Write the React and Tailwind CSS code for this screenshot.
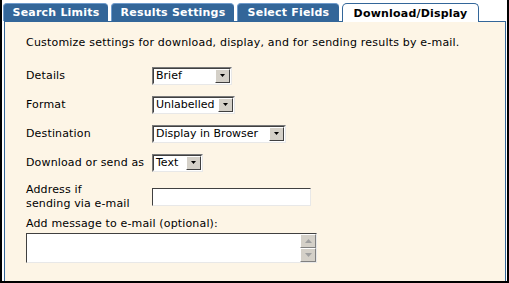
import React from "react";

const font = { fontFamily: '"DejaVu Sans", Verdana, sans-serif' };

function Tab({ label, active, width }) {
  if (active) {
    return (
      <div
        className={`relative z-10 -mb-px h-[19px] ${width} rounded-t-[5px] border border-b-0 border-[#336699] bg-white pt-[3px] text-center text-[11px] font-bold leading-[14px] tracking-[0.2px] text-black`}
      >
        {label}
      </div>
    );
  }
  return (
    <div
      className={`h-[18px] ${width} rounded-t-[4px] border-l border-t border-[#6f9bcc] bg-[#336699] pt-[2px] text-center text-[11px] font-bold leading-[14px] tracking-[0.2px] text-white`}
    >
      {label}
    </div>
  );
}

function Select({ value, width }) {
  return (
    <div
      className={`flex h-[18px] ${width} items-stretch border border-t-[#7a7a7a] border-l-[#7a7a7a] border-r-[#e8e8e8] border-b-[#e8e8e8] bg-white`}
    >
      <div className="flex flex-1 items-stretch border border-t-[#404040] border-l-[#404040] border-r-white border-b-white">
        <span className="flex-1 whitespace-nowrap pl-[2px] text-[11px] leading-[14px] text-black">{value}</span>
        <div className="flex w-[15px] items-center justify-center border border-t-white border-l-white border-r-[#404040] border-b-[#404040] bg-[#d4d0c8]">
          <svg width="7" height="4" viewBox="0 0 7 4">
            <path d="M1 0h5L3.5 3z" fill="#000" />
          </svg>
        </div>
      </div>
    </div>
  );
}

function Row({ label, children }) {
  return (
    <div className="flex items-center">
      <div className="w-[126px] text-[11px] leading-[14px] tracking-[0.15px]">{label}</div>
      {children}
    </div>
  );
}

export default function App() {
  return (
    <div
      className="flex h-[283px] w-[509px] flex-col border-b-2 border-l-2 border-r-2 border-black bg-white"
      style={font}
    >
      {/* Tabs */}
      <div className="ml-[1px] mt-[3px] flex items-end gap-[3px]">
        <Tab label="Search Limits" width="w-[105px]" />
        <Tab label="Results Settings" width="w-[123px]" />
        <Tab label="Select Fields" width="w-[102px]" />
        <Tab label="Download/Display" width="w-[137px]" active />
      </div>

      {/* Panel */}
      <div className="ml-[2px] mr-[1px] flex flex-1 flex-col border-l border-r border-t border-[#336699] bg-[#fdf5e6] pl-[21px] pt-[14px] text-black">
        <p className="text-[11px] leading-[14px] tracking-[0.2px]">
          Customize settings for download, display, and for sending results by e-mail.
        </p>

        <div className="mt-[17px] flex flex-col gap-[11px]">
          <Row label="Details">
            <Select value="Brief" width="w-[80px]" />
          </Row>
          <Row label="Format">
            <Select value="Unlabelled" width="w-[83px]" />
          </Row>
          <Row label="Destination">
            <Select value="Display in Browser" width="w-[134px]" />
          </Row>
          <Row label="Download or send as">
            <Select value="Text" width="w-[51px]" />
          </Row>
          <Row label={<>Address if<br />sending via e-mail</>}>
            <div className="h-[18px] w-[159px] border border-t-[#404040] border-l-[#404040] border-r-[#e8e8e8] border-b-[#e8e8e8] bg-white" />
          </Row>
        </div>

        <div className="mt-[6px] text-[11px] leading-[14px] tracking-[0.15px]">Add message to e-mail (optional):</div>
        <div className="mt-[2px] flex h-[30px] w-[291px] border border-t-[#404040] border-l-[#404040] border-r-[#e8e8e8] border-b-[#e8e8e8] bg-white">
          <div className="flex-1" />
          <div className="flex w-[16px] flex-col">
            <div className="flex flex-1 items-center justify-center border border-t-white border-l-white border-r-[#808080] border-b-[#808080] bg-[#d4d0c8]">
              <svg width="7" height="4" viewBox="0 0 7 4">
                <path d="M0 4h7L3.5 0z" fill="#a0a0a0" />
              </svg>
            </div>
            <div className="flex flex-1 items-center justify-center border border-t-white border-l-white border-r-[#808080] border-b-[#808080] bg-[#d4d0c8]">
              <svg width="7" height="4" viewBox="0 0 7 4">
                <path d="M0 0h7L3.5 4z" fill="#a0a0a0" />
              </svg>
            </div>
          </div>
        </div>
      </div>
    </div>
  );
}
